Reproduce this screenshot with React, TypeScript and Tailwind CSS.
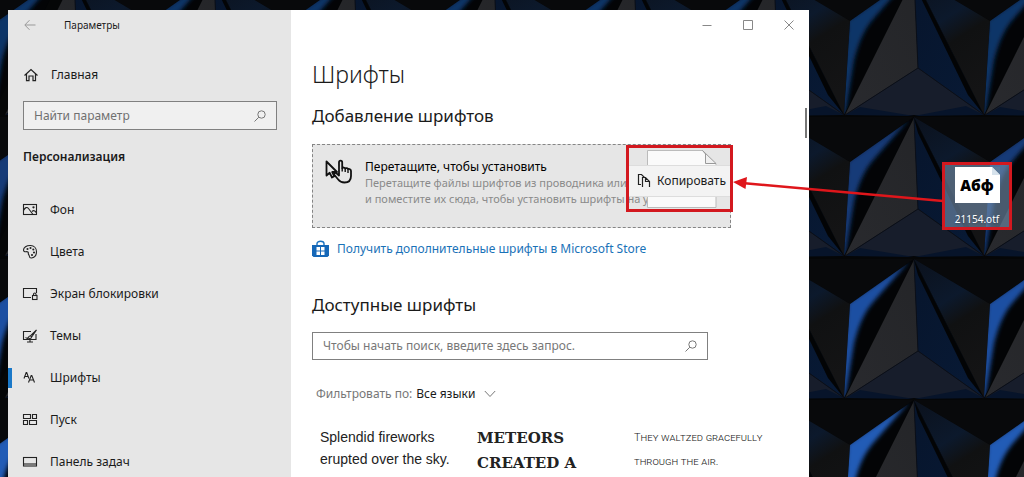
import type { ReactNode } from "react";

const icons: Record<string, ReactNode> = {
  background: (
    <>
      <rect x="1.5" y="2.5" width="13" height="10" />
      <path d="M1.500 8.500C3 5.500 5 4.500 6.500 6.500L11 12.500M10 9.500c1.500-1.500 3-1 4.500 1.500" />
      <circle cx="11.5" cy="5.3" r=".6" />
    </>
  ),
  colors: (
    <>
      <path d="M8.5 1.5C4.500 1.300 1.500 3.700 1.500 6c0 1.400 1.300 2 2.600 1.700 1.500-.3 2.500.5 2.200 1.700-.2 1 .7 1.300.9 2.300.2 1.500.8 2.500 2.300 2.300 3-.4 5-3 5-6.200 0-3.500-2.500-6.100-6-6.300Z" />
      <circle cx="5.500" cy="5" r=".5" />
      <circle cx="8.500" cy="4" r=".5" />
      <circle cx="11.300" cy="5.500" r=".5" />
      <circle cx="12" cy="8.500" r=".5" />
      <circle cx="10" cy="11" r=".5" />
    </>
  ),
  lock: (
    <>
      <path d="M9 11.500H1.500v-9h13V7" />
      <rect x="10.500" y="9.500" width="4.500" height="4" />
      <path d="M11.500 9.500V8.200a1.250 1.250 0 0 1 2.500 0v1.300" />
    </>
  ),
  themes: (
    <>
      <path d="M9 3.500H1.500v8h12.500V6M5 14h6M8 11.500V14" />
      <path d="m14.500 2-6 5.800 1.200 1.200L14.500 2ZM8.500 7.800c-1.500 0-1.800 1.200-2.200 1.700-.5.600-1.200.6-1.800.6 1.500 1 5 .8 5.200-1.100" />
    </>
  ),
  fonts: (
    <>
      <path d="m2 8.500 2.200-6h.5l2.200 6M2.800 6.500h3.200" />
      <path d="m6.500 12.500 2.700-7h.6l2.700 7M7.500 10h4" />
    </>
  ),
  start: (
    <>
      <path d="M1.500 2.500h7v4h-7ZM10.500 2.500h4v4h-4ZM1.500 8.500h4v4h-4ZM7.500 8.500h7v4h-7Z" />
    </>
  ),
  taskbar: (
    <>
      <rect x="1.500" y="3.500" width="13" height="8.500" />
      <path d="M1.500 10h13" />
    </>
  ),
};

const menu = [
  { icon: "background", title: "Фон" },
  { icon: "colors", title: "Цвета" },
  { icon: "lock", title: "Экран блокировки" },
  { icon: "themes", title: "Темы" },
  { icon: "fonts", title: "Шрифты", active: true },
  { icon: "start", title: "Пуск" },
  { icon: "taskbar", title: "Панель задач" },
];

const rows = [
  { y: -166, glow: "#0f3468" },
  { y: -24, glow: "#0f3468" },
  { y: 117, glow: "#123b78" },
  { y: 259, glow: "#1b50a2" },
  { y: 400, glow: "#225cb6" },
];
const columns = [-147, 5, 145, 285, 425, 565, 705, 845, 985];

function Wallpaper() {
  return (
    <svg
      className="absolute inset-0 h-full w-full"
      viewBox="0 0 1024 477"
      preserveAspectRatio="xMaxYMin slice"
      aria-hidden="true"
    >
      <defs>
        <linearGradient id="side" x1="0" y1="0" x2=".35" y2="1">
          <stop offset="0" stopColor="#0b111c" />
          <stop offset=".4" stopColor="#0c192c" />
          <stop offset=".58" stopColor="#101112" />
          <stop offset="1" stopColor="#141415" />
        </linearGradient>
        <linearGradient id="grey" x1="1" y1="0" x2="0" y2="1">
          <stop offset="0" stopColor="#242528" />
          <stop offset="1" stopColor="#292a2e" />
        </linearGradient>
        <linearGradient id="navy" x1="0" y1="0" x2="1" y2="1">
          <stop offset="0" stopColor="#07152c" />
          <stop offset="1" stopColor="#081a36" />
        </linearGradient>
        <filter id="soft" x="-20%" y="-20%" width="140%" height="140%">
          <feGaussianBlur stdDeviation="2" />
        </filter>
        <clipPath id="face">
          <path d="M145 45 209 0 139 139Z" />
        </clipPath>
      </defs>
      <rect width="1024" height="477" fill="#050607" />
      {rows.map((row) =>
        columns.map((x) => (
          <g key={`${x}:${row.y}`} transform={`translate(${x} ${row.y})`}>
            <path d="M69 1 73 92 0 139Z" fill="url(#grey)" />
            <path d="M69 1 73 92 139 139Z" fill="url(#navy)" />
            <path d="M0 139 73 92l66 47Z" fill="#171d2b" />
            <path d="m0 139 15-8 54 9ZM139 139l-18-9-52 10Z" fill="#07142a" />
            <path d="m69 1 4 91L0 139M73 92l66 47" stroke="#0b0f18" fill="none" />
            <path d="M69 0h140l-64 45Z" fill="#08090b" />
            <path d="m69 0 76 45-6 94Z" fill="url(#side)" />
            <path d="m69 1 70 138-16-20L73 16Z" fill="#030405" />
            <path d="M145 45 209 0 139 139Z" fill="#030406" />
            <g clipPath="url(#face)">
              <path
                d="M143 44 204 2l-34 39c-12 13-17 28-21 44l-9 54h-5Z"
                fill={row.glow}
                filter="url(#soft)"
              />
            </g>
          </g>
        )),
      )}
    </svg>
  );
}

function SearchIcon() {
  return (
    <svg className="h-3 w-3 shrink-0" viewBox="0 0 12 12" fill="none" stroke="#777">
      <circle cx="7.500" cy="4.500" r="3.700" />
      <path d="M4.800 7.200.5 11.500" />
    </svg>
  );
}

function Sidebar() {
  return (
    <aside className="w-[283px] shrink-0 bg-[#e6e6e6]">
      <header className="flex h-[30px] items-center pl-4">
        <button aria-label="Назад" className="w-10">
          <svg className="h-3 w-3" viewBox="0 0 12 12" fill="none" stroke="#999">
            <path d="M11.500 6H1M5.500 1.200.8 6l4.700 4.800" />
          </svg>
        </button>
        <span className="text-[10px]">Параметры</span>
      </header>
      <a href="#home" className="mt-[17px] flex h-9 items-center gap-3 pl-[15px] text-[12px]">
        <svg className="h-4 w-4" viewBox="0 0 16 16" fill="none" stroke="#222" strokeWidth="1.200">
          <path d="M1.500 8.500 8 2.500l6.500 6M3.500 7v6.700h2.500V9h4v4.700h2.500V7" />
        </svg>
        Главная
      </a>
      <label className="mt-2 mr-3.5 ml-[15px] flex h-[29px] items-center border border-[#808080] bg-[#f0f0f0] px-2.5">
        <input
          type="text"
          aria-label="Найти параметр"
          placeholder="Найти параметр"
          className="min-w-0 flex-1 bg-transparent text-[12px] outline-none placeholder:text-[#707070]"
        />
        <SearchIcon />
      </label>
      <h2 className="mt-[15px] pl-[15px] text-[12px] leading-6 font-semibold">Персонализация</h2>
      <nav className="mt-5">
        {menu.map((item) => (
          <a
            key={item.icon}
            href={`#${item.icon}`}
            className="relative flex h-[42px] items-center gap-3 pl-3.5 text-[12px]"
          >
            {item.active && <span className="absolute left-0 h-5 w-1 bg-[#1a78c8]" />}
            <svg
              className="h-4 w-4"
              viewBox="0 0 16 16"
              fill="none"
              stroke="#222"
              strokeWidth="1.100"
            >
              {icons[item.icon]}
            </svg>
            {item.title}
          </a>
        ))}
      </nav>
    </aside>
  );
}

function DragPreview() {
  return (
    <div className="absolute top-0 -right-[3px] flex h-[67px] w-[107px] items-center border-3 border-[#d3181f] pt-1">
      <svg className="absolute top-0.5 left-[18px] h-[58px] w-[70px]" viewBox="0 0 70 58">
        <path d="M.500.500h55L69 13.500v44H.500Z" fill="#fafafa" />
        <path d="M55.500.500H.500v57H69v-44" fill="none" stroke="#bbb" />
        <path d="M55.500.500 58.500 4v9.500H69Z" fill="#f0f0f0" stroke="#999" />
      </svg>
      <div className="relative flex h-8 w-full items-center gap-1.5 border-y border-[#ddd] bg-[#f3f3f3] pl-2 text-[12px]">
        <svg className="h-4 w-3.5 shrink-0" viewBox="0 0 14 16" fill="none" stroke="#222" strokeWidth="1.200">
          <path d="M4 11.500H1.500v-10h3l3 3" />
          <path d="M5.500 14V4.500h3l4 4V14M8.500 4.500v4h4" />
        </svg>
        Копировать
      </div>
    </div>
  );
}

function DropZone() {
  return (
    <section className="relative mt-4 flex h-[84px] w-[419px] gap-3 border border-dashed border-[#858585] bg-[#e6e6e6] pt-3.5 pl-3">
      <svg
        className="h-7 w-7 shrink-0"
        viewBox="0 0 28 28"
        fill="none"
        stroke="#111"
        strokeWidth="1.800"
        strokeLinejoin="round"
      >
        <path
          d="M14 14V3.500c0-2.400 3.200-2.400 3.200 0V9c.8-.8 2.500-.6 3 .4 1-.6 2.400-.2 2.800.7 1.200-.5 3 .1 3 1.900v5c0 4.200-2.700 6.500-6.500 6.500-3 0-4.800-1-6.300-3L9.500 16c-1-1.500.8-2.800 2-1.700l2.500 2.200Z"
          fill="#e6e6e6"
        />
        <path d="M17.200 9v3.500M20.200 9.500v3.500M23 10.500V14" strokeWidth="1.400" />
        <path d="M1.500 2.500v14l3.200-2.700L7 18.500l2.300-1.200L7.200 13H12Z" fill="#e6e6e6" />
      </svg>
      <div className="text-[11px] leading-4 whitespace-nowrap text-[#8a8a8a]">
        <h3 className="text-[12px] text-black">Перетащите, чтобы установить</h3>
        <p>Перетащите файлы шрифтов из проводника или</p>
        <p>и поместите их сюда, чтобы установить шрифты на у</p>
      </div>
      <DragPreview />
    </section>
  );
}

function FontsPage() {
  return (
    <main className="relative min-w-0 flex-1 bg-white pl-[21px]">
      <header className="flex h-[30px] items-center justify-end">
        {[
          { label: "Свернуть", path: "M1.500 6.500h9" },
          { label: "Развернуть", path: "M1.500 1.500h9v9h-9Z" },
          { label: "Закрыть", path: "m1.500 1.500 9 9m0-9-9 9" },
        ].map((control) => (
          <button key={control.label} aria-label={control.label} className="flex w-[41px] justify-center">
            <svg className="h-3 w-3" viewBox="0 0 12 12" fill="none" stroke="#888">
              <path d={control.path} />
            </svg>
          </button>
        ))}
      </header>
      <h1 className="mt-4 text-[23px] leading-9 font-light">Шрифты</h1>
      <h2 className="mt-3 text-[17px] leading-6">Добавление шрифтов</h2>
      <DropZone />
      <a href="#store" className="mt-[9px] flex h-6 items-center gap-2 text-[12px] text-[#1a72b8]">
        <svg className="h-[18px] w-[17px]" viewBox="0 0 17 18">
          <path d="M5 5V3.500C5 .500 12 .500 12 3.500V5" fill="none" stroke="#1a72c0" strokeWidth="1.400" />
          <path d="M0 5h17v10.500L15.500 17h-14L0 15.500Z" fill="#1668b8" />
          <path d="M4.500 7h3.500v3.500H4.500ZM9 7h3.500v3.500H9ZM4.500 11.500h3.500V15H4.500ZM9 11.500h3.500V15H9Z" fill="#fff" />
        </svg>
        Получить дополнительные шрифты в Microsoft Store
      </a>
      <h2 className="mt-8 text-[17px] leading-6">Доступные шрифты</h2>
      <label className="mt-[15px] flex h-7 w-[396px] items-center border border-[#808080] px-2.5">
        <input
          type="text"
          aria-label="Поиск шрифтов"
          placeholder="Чтобы начать поиск, введите здесь запрос."
          className="min-w-0 flex-1 text-[12px] outline-none placeholder:text-[#777]"
        />
        <SearchIcon />
      </label>
      <div className="mt-6 flex h-5 items-center gap-1 pl-1 text-[12px]">
        <label htmlFor="language" className="text-[#777]">
          Фильтровать по:
        </label>
        <select id="language" className="appearance-none bg-transparent">
          <option>Все языки</option>
        </select>
        <svg className="ml-1 h-2 w-3" viewBox="0 0 12 8" fill="none" stroke="#777">
          <path d="m.8 1 5.200 5.500L11.200 1" />
        </svg>
      </div>
      <div className="mt-[22px] flex pl-2 whitespace-nowrap text-[#222]">
        <p className="w-[157px] font-['Liberation_Sans'] text-[14px] leading-[22px]">
          Splendid fireworks
          <br />
          erupted over the sky.
        </p>
        <p className="w-[157px] font-['DejaVu_Serif'] text-[15px] leading-[25px] font-bold">
          METEORS
          <br />
          CREATED A
        </p>
        <p className="font-['Roboto'] text-[11px] leading-6 font-light text-[#222] [font-variant:small-caps]">
          They waltzed gracefully
          <br />
          through the air.
        </p>
      </div>
      <span className="absolute top-[98px] right-0.5 h-[30px] w-0.5 bg-[#777]" />
    </main>
  );
}

function DesktopFile() {
  return (
    <button className="mt-[152px] ml-[133px] flex h-[68px] w-[70px] flex-col items-center border-3 border-[#d3181f] bg-[#7895b4]/60 pt-0.5 text-white">
      <span className="relative flex h-9 w-[45px] items-center justify-center bg-white font-['Open_Sans'] text-[15px] font-extrabold text-black">
        Абф
        <svg className="absolute top-0 right-0 h-2 w-2" viewBox="0 0 8 8">
          <path d="M0 0h8v8Z" fill="#5b7898" />
          <path d="M0 0v8h8Z" fill="#d6e2ec" />
        </svg>
      </span>
      <span className="mt-2 text-[10px] leading-4 text-shadow-md">21154.otf</span>
    </button>
  );
}

export default function App() {
  return (
    <div className="relative flex h-screen overflow-hidden pt-2.5 pl-2 font-['Noto_Sans','Open_Sans',sans-serif] text-[#1a1a1a]">
      <Wallpaper />
      <div className="relative flex min-w-0 flex-1">
        <Sidebar />
        <FontsPage />
      </div>
      <div className="relative w-[215px] shrink-0">
        <DesktopFile />
        <svg className="absolute top-[160px] -left-[77px] h-10 w-[212px]" viewBox="0 0 212 40">
          <path d="M10 13 211 31" stroke="#df161b" strokeWidth="2.500" />
          <path d="m1 12 14-5-1.500 12Z" fill="#df161b" />
        </svg>
      </div>
    </div>
  );
}
